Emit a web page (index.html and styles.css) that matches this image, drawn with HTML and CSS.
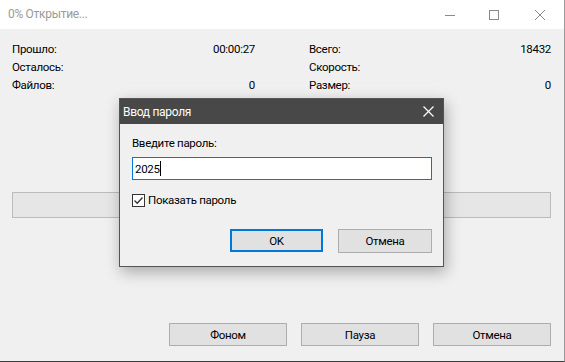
FILE: index.html
```html
<!DOCTYPE html>
<html>
<head>
<meta charset="utf-8">
<link rel="stylesheet" href="styles.css">
</head>
<body>
    <div class="window">
        <div class="titlebar">
            <span class="title">0% Открытие...</span>
            <div class="controls">
                <span class="ctl ctl-min"><svg width="10" height="10" viewBox="0 0 10 10"><path d="M0 5.5H10" stroke="#8a8a8a" stroke-width="1"/></svg></span>
                <span class="ctl ctl-max"><svg width="10" height="10" viewBox="0 0 10 10"><rect x="0.5" y="0.5" width="9" height="9" fill="none" stroke="#8a8a8a"/></svg></span>
                <span class="ctl ctl-close"><svg width="10" height="10" viewBox="0 0 10 10"><path d="M0 0L10 10M10 0L0 10" stroke="#8a8a8a" stroke-width="1"/></svg></span>
            </div>
        </div>

        <div class="content">
            <div class="info">
                <div class="info-col">
                    <div class="row"><span>Прошло:</span><span>00:00:27</span></div>
                    <div class="row"><span>Осталось:</span><span></span></div>
                    <div class="row"><span>Файлов:</span><span>0</span></div>
                </div>
                <div class="info-col">
                    <div class="row"><span>Всего:</span><span>18432</span></div>
                    <div class="row"><span>Скорость:</span><span></span></div>
                    <div class="row"><span>Размер:</span><span>0</span></div>
                </div>
            </div>

            <div class="progress"></div>

            <div class="actions">
                <button class="btn">Фоном</button>
                <button class="btn">Пауза</button>
                <button class="btn">Отмена</button>
            </div>
        </div>

        <div class="dialog">
            <div class="dialog-title">
                <span>Ввод пароля</span>
                <svg width="11" height="11" viewBox="0 0 11 11"><path d="M0.5 0.5L10.5 10.5M10.5 0.5L0.5 10.5" stroke="#fff" stroke-width="1.2"/></svg>
            </div>
            <div class="dialog-body">
                <div class="prompt">Введите пароль:</div>
                <div class="field"><span>2025</span><span class="caret"></span></div>
                <label class="check">
                    <span class="box"><svg width="11" height="11" viewBox="0 0 11 11"><path d="M1.5 5.5L4.2 8.2L9.5 2.5" fill="none" stroke="#333" stroke-width="1.3"/></svg></span>
                    Показать пароль
                </label>
                <div class="dialog-buttons">
                    <button class="btn btn-default">OK</button>
                    <button class="btn">Отмена</button>
                </div>
            </div>
        </div>
    </div>
</body>
</html>
```

FILE: styles.css
```css
body {
    margin: 0;
    background-color: #f0f0f0;
    font-family: Roboto, "Liberation Sans", sans-serif;
    font-size: 11.5px;
    letter-spacing: -0.3px;
    color: #000;
}
.window {
    position: relative;
    width: 564px;
    height: 361px;
    border-right: 1px solid #9a9a9a;
    border-bottom: 1px solid #3a3a3a;
    background-color: #f0f0f0;
    overflow: hidden;
}
.titlebar {
    height: 29px;
    background-color: #fff;
    display: flex;
    align-items: center;
    justify-content: space-between;
}
.title {
    color: #9a9a9a;
    margin-left: 8px;
    margin-top: -1px;
    font-size: 12px;
}
.controls {
    display: flex;
    height: 100%;
    align-items: center;
}
.ctl {
    display: flex;
    width: 10px;
    height: 10px;
}
.ctl-min { margin-right: 34px; }
.ctl-max { margin-right: 36px; }
.ctl-close { margin-right: 19px; }

.content {
    padding: 11px 13px 0 12px;
}
.info {
    display: flex;
    justify-content: space-between;
}
.info-col {
    width: 243px;
}
.info-col:last-child {
    width: 242px;
}
.row {
    display: flex;
    justify-content: space-between;
    height: 18px;
    line-height: 18px;
}
.progress {
    margin-top: 98px;
    height: 24px;
    border: 1px solid #bcbcbc;
    background-color: #e6e6e6;
}
.actions {
    display: flex;
    justify-content: flex-end;
    gap: 14px;
    margin-top: 105px;
}
.btn {
    width: 118px;
    height: 23px;
    border: 1px solid #adadad;
    background-color: #e1e1e1;
    font-family: inherit;
    font-size: 11.5px;
    letter-spacing: -0.3px;
    color: #000;
    padding: 0;
}

.dialog {
    position: absolute;
    left: 119px;
    top: 98px;
    width: 323px;
    height: 167px;
    border: 1px solid #555;
    background-color: #f0f0f0;
    box-shadow: 2px 5px 14px rgba(0, 0, 0, 0.3);
}
.dialog-title {
    height: 25px;
    background-color: #484848;
    color: #fff;
    font-size: 12px;
    display: flex;
    align-items: center;
    justify-content: space-between;
    padding: 0 9px 0 3px;
}
.dialog-title span {
    margin-top: 1px;
}
.dialog-body {
    padding: 11px 11px 0 12px;
}
.prompt {
    height: 16px;
    line-height: 16px;
}
.field {
    margin-top: 6px;
    height: 21px;
    border: 1px solid #0078d7;
    background-color: #fff;
    display: flex;
    align-items: center;
    padding-left: 2px;
}
.caret {
    width: 1px;
    height: 15px;
    background-color: #000;
}
.check {
    display: flex;
    align-items: center;
    gap: 3px;
    margin-top: 13px;
    height: 14px;
}
.box {
    width: 11px;
    height: 11px;
    border: 1px solid #333;
    background-color: #fff;
    display: flex;
}
.dialog-buttons {
    display: flex;
    justify-content: flex-end;
    gap: 14px;
    margin-top: 22px;
}
.dialog-buttons .btn {
    width: 94px;
    height: 24px;
}
.dialog-buttons .btn-default {
    width: 93px;
    height: 23px;
    border: 2px solid #0078d7;
    margin-right: 1px;
}
```
